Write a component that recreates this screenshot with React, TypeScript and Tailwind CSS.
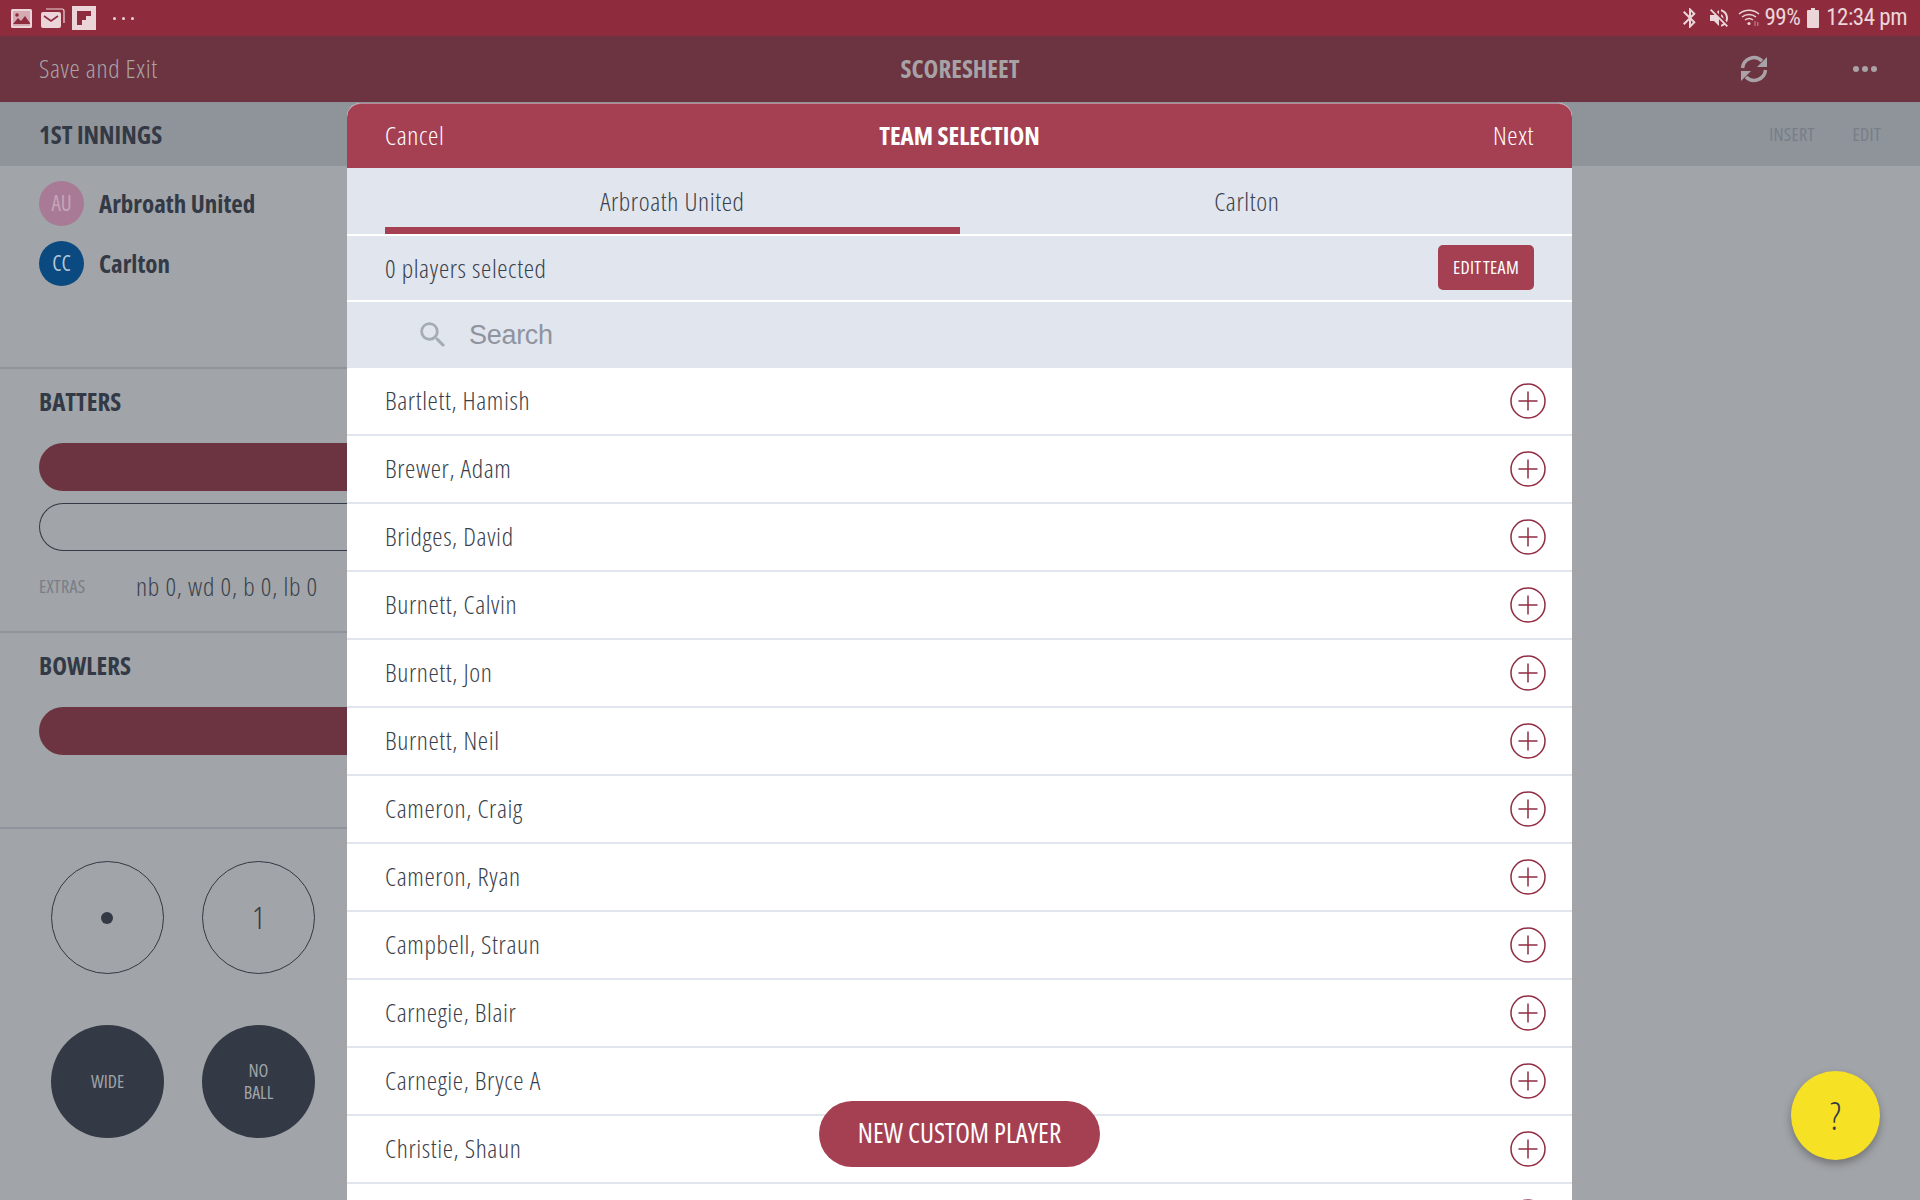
import React from "react";
import { MdBluetooth, MdVolumeOff, MdSearch } from "react-icons/md";

const players = [
  "Bartlett, Hamish",
  "Brewer, Adam",
  "Bridges, David",
  "Burnett, Calvin",
  "Burnett, Jon",
  "Burnett, Neil",
  "Cameron, Craig",
  "Cameron, Ryan",
  "Campbell, Straun",
  "Carnegie, Blair",
  "Carnegie, Bryce A",
  "Christie, Shaun",
  "",
];

function PlusIcon() {
  return (
    <svg width="36" height="36" viewBox="0 0 36 36" fill="none" stroke="#8f2d42" strokeWidth="1.5">
      <circle cx="18" cy="18" r="17" />
      <path d="M18 8.5v19M8.5 18h19" />
    </svg>
  );
}

function SyncIcon() {
  return (
    <svg width="28" height="28" viewBox="0 0 28 28" fill="none" stroke="#a9a2a7" strokeWidth="3.5">
      <path d="M2.5 13A11.5 11.5 0 0 1 22 6" />
      <path d="M27 2v10H17z" fill="#a9a2a7" stroke="none" />
      <path d="M25.5 15A11.5 11.5 0 0 1 6 22" />
      <path d="M1 26V16h10z" fill="#a9a2a7" stroke="none" />
    </svg>
  );
}

function WifiIcon() {
  return (
    <svg className="ml-[7px]" width="24" height="24" viewBox="0 0 24 24" fill="none" stroke="#ecd5d9" strokeWidth="1.4">
      <path d="M1 8a15 15 0 0 1 20 0M4 11a11 11 0 0 1 14 0M7 14a6.500 6.500 0 0 1 8 0" />
      <circle cx="11" cy="17.500" r="1.600" fill="#ecd5d9" stroke="none" />
      <path d="M17 15v5M19.800 20v-4" strokeWidth="1" opacity="0.6" />
    </svg>
  );
}

function StatusBar() {
  return (
    <div className="h-[36px] bg-[#8e2c3e] flex items-center justify-between pl-[11px] pr-[13px] text-[#ecd5d9]">
      <div className="flex items-center">
        <svg width="21" height="19" viewBox="0 0 21 19">
          <rect width="21" height="19" rx="1.5" fill="#ecd5d9" />
          <rect x="2" y="2" width="17" height="15" fill="#8e2c3e" opacity="0.25" />
          <path d="M2 15l5-6 3 3 4-5 5 7v1H2z" fill="#8e2c3e" />
          <circle cx="6" cy="6" r="1.8" fill="#8e2c3e" />
        </svg>
        <svg className="ml-[9px]" width="24" height="20" viewBox="0 0 24 20">
          <path d="M5 1h16a2 2 0 0 1 2 2v12" fill="none" stroke="#ecd5d9" strokeWidth="1.2" />
          <rect x="0" y="4" width="20" height="16" rx="2" fill="#ecd5d9" />
          <path d="M3 8l7 5 7-5" fill="none" stroke="#8e2c3e" strokeWidth="1.6" />
        </svg>
        <svg className="ml-[7px]" width="24" height="24" viewBox="0 0 24 24">
          <rect width="24" height="24" fill="#ecd5d9" />
          <path d="M5 5h14v5h-5v4h-4v5H5z" fill="#8e2c3e" />
        </svg>
        <div className="ml-[17px] flex gap-[6px]">
          <div className="w-[3px] h-[3px] bg-[#ecd5d9] rounded-full" />
          <div className="w-[3px] h-[3px] bg-[#ecd5d9] rounded-full" />
          <div className="w-[3px] h-[3px] bg-[#ecd5d9] rounded-full" />
        </div>
      </div>
      <div className="flex items-center font-['Roboto',sans-serif] text-[23px] [font-stretch:85%]">
        <MdBluetooth size={24} />
        <MdVolumeOff size={24} className="ml-[5px]" />
        <WifiIcon />
        <span className="ml-[3px] tracking-[-0.5px]">99%</span>
        <svg className="ml-[7px]" width="12" height="20" viewBox="0 0 12 20" fill="#ecd5d9">
          <path d="M4 0h4v2h3a1 1 0 0 1 1 1v16a1 1 0 0 1-1 1H1a1 1 0 0 1-1-1V3a1 1 0 0 1 1-1h3z" />
        </svg>
        <span className="ml-[7px] tracking-[-0.5px]">12:34 pm</span>
      </div>
    </div>
  );
}

function Background() {
  return (
    <>
      <div className="h-[66px] bg-[#6b3440] flex items-center justify-between px-[39px] text-[#a9a2a7]">
        <span className="text-[26px] font-light tracking-[0.6px] w-[300px] pb-[1px]">Save and Exit</span>
        <span className="text-[25px] font-bold text-[#a7a2a6]">SCORESHEET</span>
        <div className="w-[300px] pr-[4px] flex items-center justify-end gap-[85px]">
          <SyncIcon />
          <div className="flex gap-[3px]">
            <div className="w-[6px] h-[6px] rounded-full bg-[#a9a2a7]" />
            <div className="w-[6px] h-[6px] rounded-full bg-[#a9a2a7]" />
            <div className="w-[6px] h-[6px] rounded-full bg-[#a9a2a7]" />
          </div>
        </div>
      </div>
      <div className="h-[64px] bg-[#8f949b] flex items-center justify-between pl-[39px] pr-[39px]">
        <span className="text-[25px] font-bold text-[#333945] pt-[2px]">1ST INNINGS</span>
        <div className="flex gap-[38px] text-[18px] tracking-[0.3px] text-[#787d87]">
          <span>INSERT</span>
          <span>EDIT</span>
        </div>
      </div>
      <div className="w-[347px]">
        <div className="h-[203px] border-b-2 border-[#8f939b] pl-[39px] pt-[15px] text-[#333945]">
          <div className="flex items-center h-[45px]">
            <div className="w-[45px] h-[45px] rounded-full bg-[#a87a95] text-[#c4a4b9] text-[21px] flex items-center justify-center">AU</div>
            <span className="ml-[15px] text-[25px] font-bold">Arbroath United</span>
          </div>
          <div className="flex items-center h-[45px] mt-[15px]">
            <div className="w-[45px] h-[45px] rounded-full bg-[#0b4a80] text-[#b5c6d6] text-[21px] flex items-center justify-center">CC</div>
            <span className="ml-[15px] text-[25px] font-bold">Carlton</span>
          </div>
        </div>
        <div className="h-[264px] border-b-2 border-[#8f939b] pl-[39px] pt-[16px]">
          <div className="text-[25px] font-bold text-[#333945] leading-[32px]">BATTERS</div>
          <div className="mt-[26px] h-[48px] bg-[#6b3440] rounded-l-full" />
          <div className="mt-[12px] h-[48px] border border-r-0 border-[#333945] rounded-l-full" />
          <div className="mt-[16px] flex items-center whitespace-nowrap">
            <span className="text-[18px] tracking-[0.3px] text-[#787d87] w-[97px]">EXTRAS</span>
            <span className="text-[26px] font-light tracking-[0.7px] text-[#3a3f4b]">nb 0, wd 0, b 0, lb 0</span>
          </div>
        </div>
        <div className="h-[196px] border-b-2 border-[#8f939b] pl-[39px] pt-[16px]">
          <div className="text-[25px] font-bold text-[#333945] leading-[32px]">BOWLERS</div>
          <div className="mt-[26px] h-[48px] bg-[#6b3440] rounded-l-full" />
        </div>
        <div className="pl-[51px] pt-[32px] grid grid-cols-[113px_113px] gap-x-[38px] gap-y-[51px]">
          <div className="h-[113px] rounded-full border border-[#333945] flex items-center justify-center">
            <div className="w-[12px] h-[12px] rounded-full bg-[#333945] mr-[2px]" />
          </div>
          <div className="h-[113px] rounded-full border border-[#333945] flex items-center justify-center pb-[2px] text-[32px] font-light text-[#333945]">1</div>
          <div className="h-[113px] rounded-full bg-[#333945] flex items-center justify-center text-[18px] text-[#a1a4a8]">WIDE</div>
          <div className="h-[113px] rounded-full bg-[#333945] flex items-center justify-center pb-[2px] text-center text-[18px] leading-[22px] text-[#a1a4a8]">
            NO
            <br />
            BALL
          </div>
        </div>
      </div>
    </>
  );
}

function TeamModal() {
  return (
    <div className="absolute left-[347px] top-[103px] w-[1225px] bottom-0 bg-white rounded-t-[14px] overflow-hidden">
      <div className="h-[65px] bg-[#a54053] border-t border-[#b98a95] flex items-center justify-between px-[38px] text-white rounded-t-[14px]">
        <span className="text-[26px] font-light tracking-[0.6px] w-[120px] pb-[2px]">Cancel</span>
        <span className="text-[25px] font-bold pb-[1px]">TEAM SELECTION</span>
        <span className="text-[26px] font-light tracking-[0.6px] w-[120px] text-right pb-[2px]">Next</span>
      </div>
      <div className="h-[68px] bg-[#e1e5ee] border-b-2 border-white px-[38px] flex text-[26px] font-light tracking-[0.6px] text-[#3a3f4b]">
        <div className="w-1/2 flex items-center justify-center border-b-[7px] border-[#a54053] pt-[8px]">Arbroath United</div>
        <div className="w-1/2 flex items-center justify-center border-b-[7px] border-transparent pt-[8px]">Carlton</div>
      </div>
      <div className="h-[66px] bg-[#e1e5ee] border-b-2 border-white pl-[38px] pr-[38px] flex items-center justify-between">
        <span className="text-[26px] font-light tracking-[0.6px] text-[#3a3f4b] pt-[1px]">0 players selected</span>
        <button className="w-[96px] h-[45px] mb-[1px] rounded-[5px] bg-[#a54053] text-white text-[18px] font-medium tracking-[0.3px] [word-spacing:-2px]">EDIT TEAM</button>
      </div>
      <div className="h-[66px] bg-[#e1e5ee] flex items-center pl-[69px] font-['Liberation_Sans',sans-serif] [font-stretch:normal]">
        <MdSearch size={34} className="text-[#a4acb4]" />
        <span className="ml-[19px] text-[27px] tracking-[-0.3px] text-[#8f949e]">Search</span>
      </div>
      <div>
        {players.map((name, i) => (
          <div key={i} className="h-[68px] border-b-2 border-[#e1e5ee] pl-[38px] pr-[26px] flex items-center justify-between">
            <span className="text-[26px] font-light tracking-[0.6px] text-[#3a3f4b] pb-[1px]">{name}</span>
            <PlusIcon />
          </div>
        ))}
      </div>
    </div>
  );
}

export default function App() {
  return (
    <div className="relative w-[1920px] h-[1200px] overflow-hidden bg-[#a1a4a8] font-['Open_Sans',sans-serif] [font-stretch:75%]">
      <StatusBar />
      <Background />
      <TeamModal />
      <button className="absolute left-[819px] top-[1101px] w-[281px] h-[66px] pb-[2px] rounded-full bg-[#a54053] text-white text-[27px]">
        NEW CUSTOM PLAYER
      </button>
      <button className="absolute left-[1791px] top-[1071px] w-[89px] h-[89px] rounded-full bg-[#f7e125] text-[#333945] text-[38px] font-light shadow-[0_4px_8px_rgba(0,0,0,0.3)]">
        ?
      </button>
    </div>
  );
}
